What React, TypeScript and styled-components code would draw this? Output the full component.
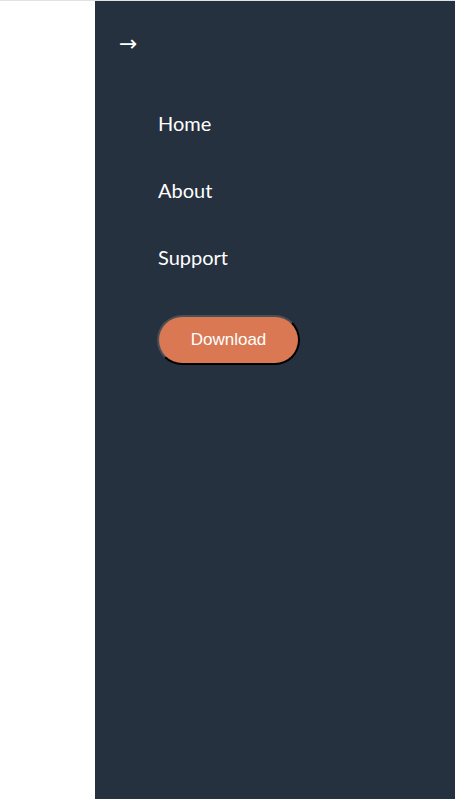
import React from "react";
import styled, { createGlobalStyle } from "styled-components";

const Global = createGlobalStyle`
  html, body { margin: 0; padding: 0; background: #ffffff; }
  body { font-family: "Liberation Sans", Arial, sans-serif; }
`;

const Page = styled.div`
  min-height: 799px;
  border-top: 1px solid #e2e2e6;
  display: flex;
  justify-content: flex-end;
  box-sizing: border-box;
`;

const Drawer = styled.aside`
  width: 360px;
  min-height: 798px;
  background: #263140;
  display: flex;
  flex-direction: column;
  padding: 30px 0 0 0;
  box-sizing: border-box;
`;

const CloseButton = styled.button`
  align-self: flex-start;
  margin-left: 24px;
  background: none;
  border: none;
  color: #ffffff;
  font-family: "DejaVu Sans", sans-serif;
  font-size: 22px;
  line-height: 26px;
  padding: 0;
  cursor: pointer;
`;

const Nav = styled.nav`
  display: flex;
  flex-direction: column;
  padding: 53px 0 0 63px;
  gap: 40px;
`;

const NavLink = styled.a`
  color: #ffffff;
  font-family: Lato, "Open Sans", sans-serif;
  font-size: 20px;
  line-height: 27px;
  text-decoration: none;
`;

const DownloadButton = styled.button`
  align-self: flex-start;
  margin-top: 4px;
  margin-left: -1px;
  width: 143px;
  height: 50px;
  border-radius: 25px;
  border: 2px outset #1a1a1a;
  border-color: #4a4f55 #000000 #000000 #4a4f55;
  background: #d97852;
  color: #ffffff;
  font-family: "Liberation Sans", Arial, sans-serif;
  font-size: 17px;
  cursor: pointer;
`;

export default function App() {
  return (
    <>
      <Global />
      <Page>
        <Drawer>
          <CloseButton aria-label="Close menu">→</CloseButton>
          <Nav>
            <NavLink href="#">Home</NavLink>
            <NavLink href="#">About</NavLink>
            <NavLink href="#">Support</NavLink>
            <DownloadButton>Download</DownloadButton>
          </Nav>
        </Drawer>
      </Page>
    </>
  );
}
